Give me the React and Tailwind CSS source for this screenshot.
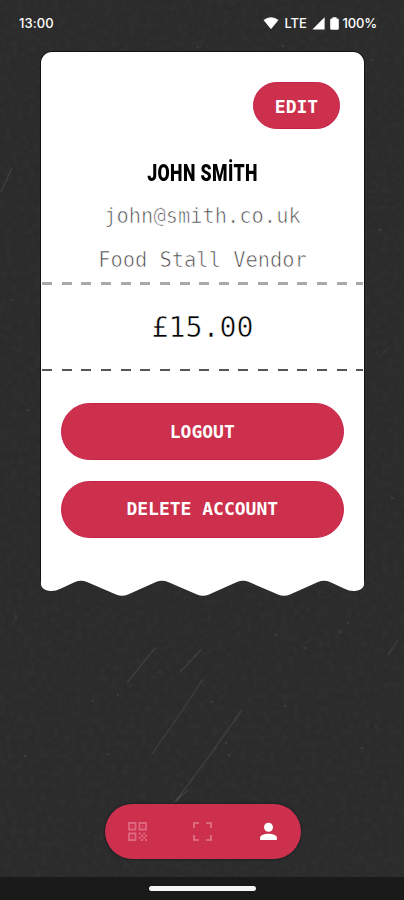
import React from 'react';

const scratches = [
  'M155 648 L127 683',
  'M202 649 L180 672',
  'M203 679 L182 711 L152 754',
  'M242 710 L210 755 L176 801',
  'M12 168 L1 192',
  'M188 790 L172 804',
  'M398 640 L388 655',
];

const specks = [
  [93, 701], [348, 623], [341, 632], [305, 648], [285, 706], [376, 726], [362, 748], [25, 756],
  [108, 754], [226, 743], [229, 755], [118, 695], [212, 702], [160, 672], [276, 635], [372, 60],
  [198, 47], [283, 46], [12, 300], [28, 410], [384, 352], [392, 498], [380, 230], [16, 618],
];

const Backdrop = () => (
  <svg className="absolute inset-0 size-full" viewBox="0 0 404 900" fill="none" aria-hidden="true">
    <filter id="grain" x="0" y="0" width="100%" height="100%">
      <feTurbulence type="fractalNoise" baseFrequency="0.17" numOctaves="4" seed="4" />
      <feColorMatrix values="0 0 0 0 1  0 0 0 0 1  0 0 0 0 1  0.25 0 0 0 -0.09" />
    </filter>
    <rect width="404" height="900" filter="url(#grain)" opacity="0.2" />
    {scratches.map((d) => (
      <path key={d} d={d} stroke="#fff" strokeOpacity="0.09" strokeWidth="1.3" />
    ))}
    {specks.map(([x, y]) => (
      <circle key={`${x}-${y}`} cx={x} cy={y} r="1.3" fill="#fff" fillOpacity="0.08" />
    ))}
  </svg>
);

const StatusBar = () => (
  <header className="relative flex h-[52px] shrink-0 items-start justify-between pt-[13px] pr-[27px] pl-[19px] font-['Inter'] text-[13px] leading-5 font-medium text-white">
    <span className="tracking-[0.1px]">13:00</span>
    <div className="flex items-center">
      <svg className="mr-[6px] h-[12px] w-[16px]" viewBox="0 0 16 12" fill="currentColor">
        <path d="M0.5 3 Q8 -2.6 15.5 3 L8.6 11.4 Q8 12 7.4 11.4 Z" />
      </svg>
      <span className="w-[23px] tracking-[-0.1px]">LTE</span>
      <svg className="ml-[4px] size-[13px]" viewBox="0 0 13 13" fill="currentColor">
        <path d="M0.3 12.6 L12.6 0.3 V12.6 Z" />
      </svg>
      <svg className="ml-[5px] h-[13px] w-[9px]" viewBox="0 0 9 13" fill="currentColor">
        <path d="M2.5 0.3 H6.5 V1.4 H7.4 Q8.8 1.4 8.8 2.8 V11.4 Q8.8 12.8 7.4 12.8 H1.6 Q0.2 12.8 0.2 11.4 V2.8 Q0.2 1.4 1.6 1.4 H2.5 Z" />
      </svg>
      <span className="ml-[4px] tracking-[-0.15px]">100%</span>
    </div>
  </header>
);

const PillButton = ({ className, children }) => (
  <button className={`rounded-full border border-[#c8234a] bg-[#cc304c] font-['DejaVu_Sans_Mono',monospace] text-[18px] leading-none font-bold text-white ${className}`}>
    {children}
  </button>
);

const Receipt = () => (
  <main className="relative ml-[41px] w-[323px]">
    <section className="flex h-[528px] flex-col rounded-t-[11px] bg-white font-['DejaVu_Sans_Mono',monospace] shadow-[0_0_0_1px_#111]">
      <div className="flex justify-end pt-[30px] pr-[24px]">
        <PillButton className="h-[47px] w-[87px] pt-[2px]">EDIT</PillButton>
      </div>
      <h1 className="mt-[31px] h-[28px] scale-x-[0.77] text-center font-['Roboto',sans-serif] text-[23px] leading-[28px] font-black tracking-[0.5px] whitespace-nowrap text-black">
        JOHN SMİTH
      </h1>
      <p className="mt-[14px] h-[28px] text-center text-[20.4px] leading-[28px] text-[#444] [-webkit-text-stroke:0.7px_white]">john@smith.co.uk</p>
      <p className="mt-[16px] h-[28px] text-center text-[20.4px] leading-[28px] text-[#444] [-webkit-text-stroke:0.7px_white]">Food Stall Vendor</p>
      <div className="mx-px mt-[8px] h-[3px] bg-[repeating-linear-gradient(90deg,#a9a9a9_0_10px,transparent_10px_19.65px)]" />
      <p className="flex h-[84px] items-center justify-center pt-[2px] text-[28.3px] leading-none text-black [-webkit-text-stroke:0.6px_white]">£15.00</p>
      <div className="mx-px h-[2px] bg-[repeating-linear-gradient(90deg,#555_0_10px,transparent_10px_19.65px)]" />
      <div className="flex flex-col gap-[20.5px] pt-[32px] pr-[20px] pl-[19.5px]">
        <PillButton className="h-[57px] w-full">LOGOUT</PillButton>
        <PillButton className="h-[57px] w-full">DELETE ACCOUNT</PillButton>
      </div>
    </section>
    <svg className="block h-[17px] w-[323px]" viewBox="0 0 323 17" fill="#fff">
      <path d="M0 -1 H323 V5 Q322 10 314 11 Q309 11.5 303 8.5 L289 2 Q283 -0.5 277 2 L249 14.5 Q243 17 237 14.5 L208 2 Q202 -0.5 196 2 L168 14.5 Q162 17 156 14.5 L127 2 Q121 -0.5 115 2 L87 14.5 Q81 17 75 14.5 L46 2 Q40 -0.5 34 2 L20 8.5 Q14 11.5 9 11 Q1 10 0 5 Z" />
    </svg>
  </main>
);

const QrIcon = () => (
  <svg className="size-[19px] text-[#df677f]" viewBox="0 0 19 19" fill="none" stroke="currentColor" strokeWidth="1.8">
    <path d="M1 1h6.5v6.5H1zM11.5 1H18v6.5h-6.5zM1 11.5h6.5V18H1z" />
    <path d="M3.6 4.2h1.3M14.1 4.2h1.3M3.6 14.8h1.3" strokeWidth="1.3" />
    <path d="M10.8 11.6h2.1M15.1 11.6h2.1M12.9 13.7h2.2M17.1 13.7h1.9M10.8 15.8h2.1M15.1 15.8h2.1M12.9 18h2.2M17.1 18h1.9" strokeWidth="2" />
  </svg>
);

const ScanIcon = () => (
  <svg className="size-[19px] text-[#e27b8f]" viewBox="0 0 19 19" fill="none" stroke="currentColor" strokeWidth="1.6">
    <path d="M1 6V1h5M13 1h5v5M18 13v5h-5M6 18H1v-5" />
  </svg>
);

const PersonIcon = () => (
  <svg className="size-[19px] text-white" viewBox="0 0 19 19" fill="currentColor">
    <circle cx="9.5" cy="5.2" r="4.5" />
    <path d="M1.1 18v-2.2C1.1 12.8 6 11.7 9.5 11.7s8.4 1.1 8.4 4.1V18z" />
  </svg>
);

const App = () => (
  <div className="relative flex h-[900px] w-[404px] flex-col overflow-hidden bg-[#2b2b2b]">
    <Backdrop />
    <StatusBar />
    <Receipt />
    <nav className="relative mt-auto mb-[18px] ml-[104.5px] flex h-[55px] w-[196.5px] items-center justify-between rounded-full bg-[#cc304c] px-[23px] shadow-[0_0_2px_1px_#1b2226]">
      <QrIcon />
      <ScanIcon />
      <PersonIcon />
    </nav>
    <footer className="relative flex h-[23px] shrink-0 items-center justify-center bg-[#1a1a1a]">
      <div className="ml-px h-[5px] w-[107px] rounded-full bg-[#f5f5f5]" />
    </footer>
  </div>
);

export default App;
